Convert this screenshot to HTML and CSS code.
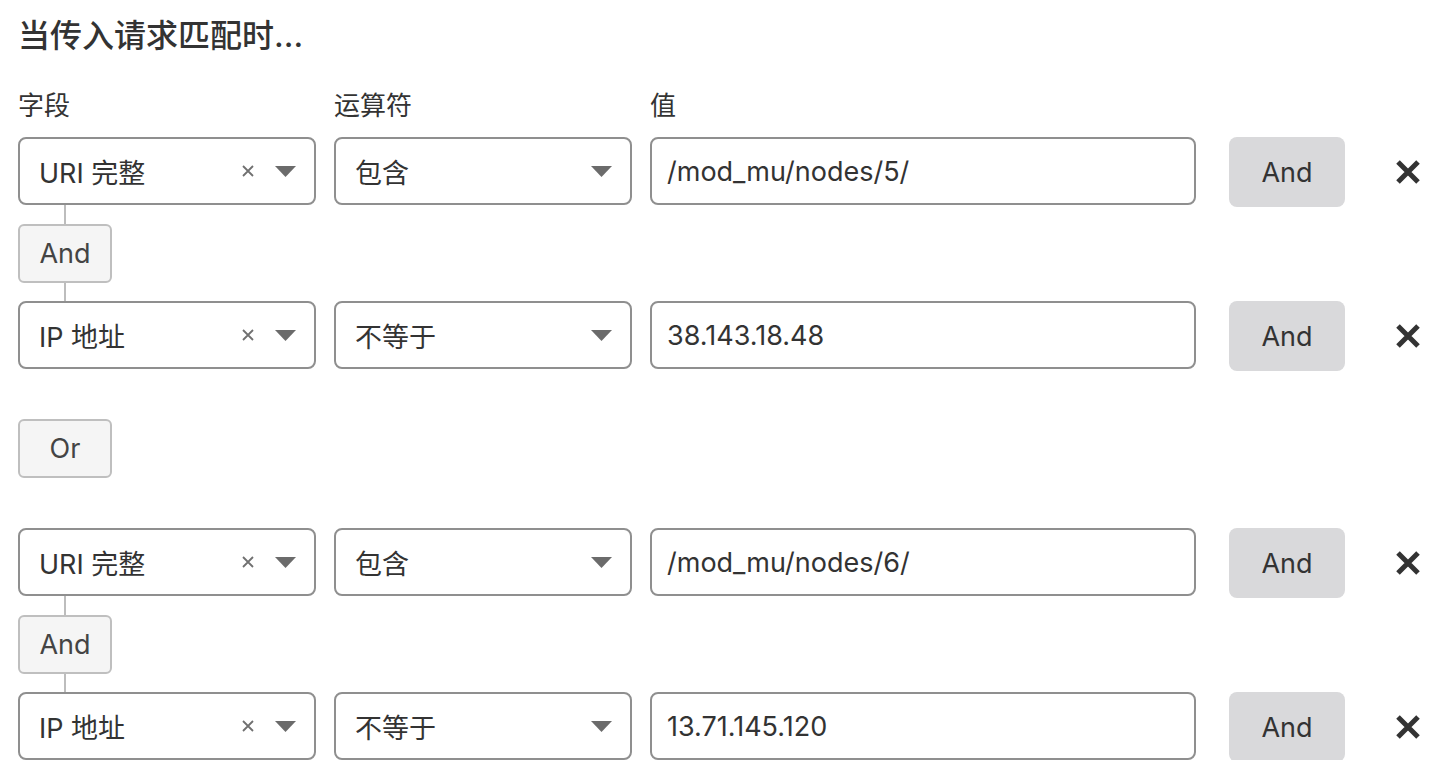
FILE: index.html
```html
<!DOCTYPE html>
<html lang="zh">
<head>
<meta charset="utf-8">
<link rel="stylesheet" href="styles.css">
</head>
<body>
<div class="page">
  <h2 class="title">当传入请求匹配时...</h2>
  <div class="labels">
    <div class="col-field">字段</div>
    <div class="col-op">运算符</div>
    <div class="col-val">值</div>
  </div>

  <div class="group">
    <div class="row">
      <div class="box col-field select">
        <span class="sel-text">URI 完整</span>
        <svg class="clear" width="12" height="12" viewBox="0 0 12 12"><path d="M1 1L11 11M11 1L1 11" stroke="#707070" stroke-width="1.8"/></svg>
        <svg class="caret" width="21" height="11" viewBox="0 0 21 11"><path d="M0 0H21L10.5 11Z" fill="#6b6b6b"/></svg>
      </div>
      <div class="box col-op select">
        <span class="sel-text">包含</span>
        <svg class="caret" width="21" height="11" viewBox="0 0 21 11"><path d="M0 0H21L10.5 11Z" fill="#6b6b6b"/></svg>
      </div>
      <div class="box col-val input">/mod_mu/nodes/5/</div>
      <button class="and-btn">And</button>
      <svg class="remove" width="26" height="26" viewBox="0 0 26 26"><path d="M3 3L23 23M23 3L3 23" stroke="#333" stroke-width="5"/></svg>
    </div>
    <div class="connector">
      <span class="line"></span>
      <div class="logic">And</div>
      <span class="line line-bottom"></span>
    </div>
    <div class="row">
      <div class="box col-field select">
        <span class="sel-text">IP 地址</span>
        <svg class="clear" width="12" height="12" viewBox="0 0 12 12"><path d="M1 1L11 11M11 1L1 11" stroke="#707070" stroke-width="1.8"/></svg>
        <svg class="caret" width="21" height="11" viewBox="0 0 21 11"><path d="M0 0H21L10.5 11Z" fill="#6b6b6b"/></svg>
      </div>
      <div class="box col-op select">
        <span class="sel-text">不等于</span>
        <svg class="caret" width="21" height="11" viewBox="0 0 21 11"><path d="M0 0H21L10.5 11Z" fill="#6b6b6b"/></svg>
      </div>
      <div class="box col-val input">38.143.18.48</div>
      <button class="and-btn">And</button>
      <svg class="remove" width="26" height="26" viewBox="0 0 26 26"><path d="M3 3L23 23M23 3L3 23" stroke="#333" stroke-width="5"/></svg>
    </div>
  </div>

  <div class="or-wrap">
    <div class="logic">Or</div>
  </div>

  <div class="group">
    <div class="row">
      <div class="box col-field select">
        <span class="sel-text">URI 完整</span>
        <svg class="clear" width="12" height="12" viewBox="0 0 12 12"><path d="M1 1L11 11M11 1L1 11" stroke="#707070" stroke-width="1.8"/></svg>
        <svg class="caret" width="21" height="11" viewBox="0 0 21 11"><path d="M0 0H21L10.5 11Z" fill="#6b6b6b"/></svg>
      </div>
      <div class="box col-op select">
        <span class="sel-text">包含</span>
        <svg class="caret" width="21" height="11" viewBox="0 0 21 11"><path d="M0 0H21L10.5 11Z" fill="#6b6b6b"/></svg>
      </div>
      <div class="box col-val input">/mod_mu/nodes/6/</div>
      <button class="and-btn">And</button>
      <svg class="remove" width="26" height="26" viewBox="0 0 26 26"><path d="M3 3L23 23M23 3L3 23" stroke="#333" stroke-width="5"/></svg>
    </div>
    <div class="connector">
      <span class="line"></span>
      <div class="logic">And</div>
      <span class="line line-bottom"></span>
    </div>
    <div class="row">
      <div class="box col-field select">
        <span class="sel-text">IP 地址</span>
        <svg class="clear" width="12" height="12" viewBox="0 0 12 12"><path d="M1 1L11 11M11 1L1 11" stroke="#707070" stroke-width="1.8"/></svg>
        <svg class="caret" width="21" height="11" viewBox="0 0 21 11"><path d="M0 0H21L10.5 11Z" fill="#6b6b6b"/></svg>
      </div>
      <div class="box col-op select">
        <span class="sel-text">不等于</span>
        <svg class="caret" width="21" height="11" viewBox="0 0 21 11"><path d="M0 0H21L10.5 11Z" fill="#6b6b6b"/></svg>
      </div>
      <div class="box col-val input">13.71.145.120</div>
      <button class="and-btn">And</button>
      <svg class="remove" width="26" height="26" viewBox="0 0 26 26"><path d="M3 3L23 23M23 3L3 23" stroke="#333" stroke-width="5"/></svg>
    </div>
  </div>
</div>
</body>
</html>
```

FILE: styles.css
```css
* { box-sizing: border-box; }

html, body {
  margin: 0;
  padding: 0;
  background: #ffffff;
}

body {
  font-family: "Inter", "Noto Sans CJK SC", sans-serif;
  color: #333333;
  font-size: 27px;
}

.page {
  padding: 16px 0 0 18px;
  display: flex;
  flex-direction: column;
  align-items: flex-start;
}

.title {
  margin: 0;
  font-size: 32px;
  font-weight: 500;
  line-height: 40px;
  color: #333333;
}

.labels {
  margin-top: 32px;
  display: flex;
  gap: 18px;
  height: 36px;
  line-height: 36px;
  font-size: 26px;
  margin-bottom: 13px;
}

.col-field { width: 298px; }
.col-op { width: 298px; }
.col-val { width: 546px; }

.group {
  display: flex;
  flex-direction: column;
  align-items: flex-start;
}

.row {
  display: flex;
  align-items: flex-start;
  gap: 18px;
  height: 68px;
}

.box {
  height: 68px;
  border: 2px solid #8f8f8f;
  border-radius: 8px;
  display: flex;
  align-items: center;
  background: #ffffff;
}

.select {
  padding: 0 18px 0 19px;
}

.sel-text {
  flex: 1;
}

.clear {
  margin-right: 21px;
}

.caret {
  margin-top: 1px;
}

.input {
  padding-left: 15px;
}

.and-btn {
  margin-left: 15px;
  width: 116px;
  height: 70px;
  border: none;
  border-radius: 8px;
  background: #d9d9db;
  color: #333333;
  font-family: "Inter", "Noto Sans CJK SC", sans-serif;
  font-size: 27px;
  padding: 0;
}

.remove {
  margin-left: 32px;
  margin-top: 22px;
}

.connector {
  width: 94px;
  display: flex;
  flex-direction: column;
  align-items: center;
}

.line {
  display: block;
  width: 2px;
  height: 19px;
  background: #bdbdbd;
}

.line-bottom {
  height: 18px;
}

.logic {
  width: 94px;
  height: 59px;
  border: 2px solid #bfbfbf;
  border-radius: 6px;
  background: #f5f5f5;
  display: flex;
  align-items: center;
  justify-content: center;
  color: #444444;
  font-size: 27px;
}

.or-wrap {
  margin: 50px 0;
}
```
